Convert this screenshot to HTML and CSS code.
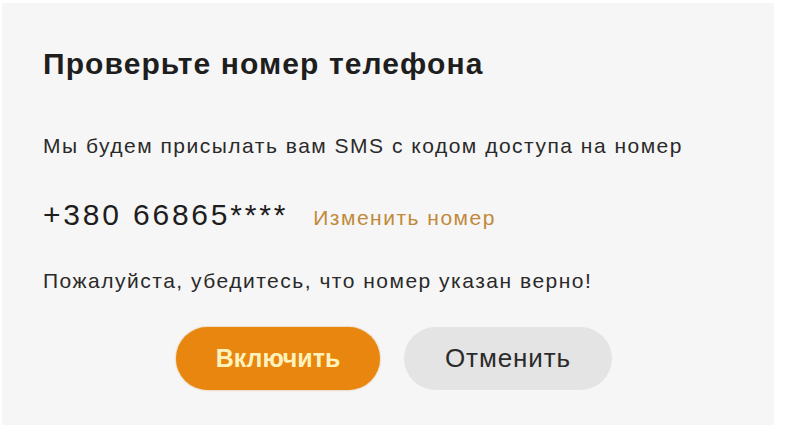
FILE: index.html
```html
<!DOCTYPE html>
<html lang="ru">
<head>
<meta charset="utf-8">
<link rel="stylesheet" href="styles.css">
</head>
<body>
<div class="dialog">
  <h1 class="title">Проверьте номер телефона</h1>
  <p class="text first">Мы будем присылать вам SMS с кодом доступа на номер</p>
  <div class="phone-row">
    <span class="phone">+380 66865****</span>
    <a class="change" href="#">Изменить номер</a>
  </div>
  <p class="text note">Пожалуйста, убедитесь, что номер указан верно!</p>
  <div class="actions">
    <button class="btn btn-primary">Включить</button>
    <button class="btn btn-secondary">Отменить</button>
  </div>
</div>
</body>
</html>
```

FILE: styles.css
```css
html, body {
  margin: 0;
  padding: 0;
  background: #ffffff;
}
body {
  width: 786px;
  height: 430px;
  overflow: hidden;
  font-family: "Liberation Sans", Arial, sans-serif;
}
.dialog {
  box-sizing: border-box;
  margin: 3px 0 0 2px;
  width: 772px;
  height: 422px;
  background: #f7f6f6;
  padding: 43px 0 0 41px;
}
.title {
  margin: 0;
  font-size: 30px;
  line-height: 36px;
  letter-spacing: 1.1px;
  font-weight: bold;
  color: #1e1e1e;
}
.text {
  margin: 0;
  font-size: 21px;
  line-height: 26px;
  letter-spacing: 1.5px;
  color: #2a2a2a;
}
.first {
  margin-top: 51px;
}
.phone-row {
  display: flex;
  align-items: baseline;
  margin-top: 38px;
  height: 36px;
}
.phone {
  font-size: 30px;
  line-height: 36px;
  letter-spacing: 2.8px;
  color: #1e1e1e;
}
.change {
  margin-left: 25px;
  font-size: 21px;
  line-height: 26px;
  letter-spacing: 1.5px;
  color: #c08a3a;
  text-decoration: none;
}
.note {
  margin-top: 35px;
}
.actions {
  display: flex;
  gap: 24px;
  margin-top: 33px;
  margin-left: 133px;
}
.btn {
  height: 63px;
  border: none;
  border-radius: 32px;
  font-family: "Liberation Sans", Arial, sans-serif;
  padding: 0;
}
.btn-primary {
  width: 204px;
  background: #e8860f;
  color: #fff2bd;
  font-size: 25px;
  font-weight: bold;
  box-shadow: 0 0 2px rgba(200, 110, 0, 0.6);
}
.btn-secondary {
  width: 208px;
  background: #e5e4e4;
  color: #2b2b2b;
  font-size: 26px;
  letter-spacing: 0.9px;
}
```
